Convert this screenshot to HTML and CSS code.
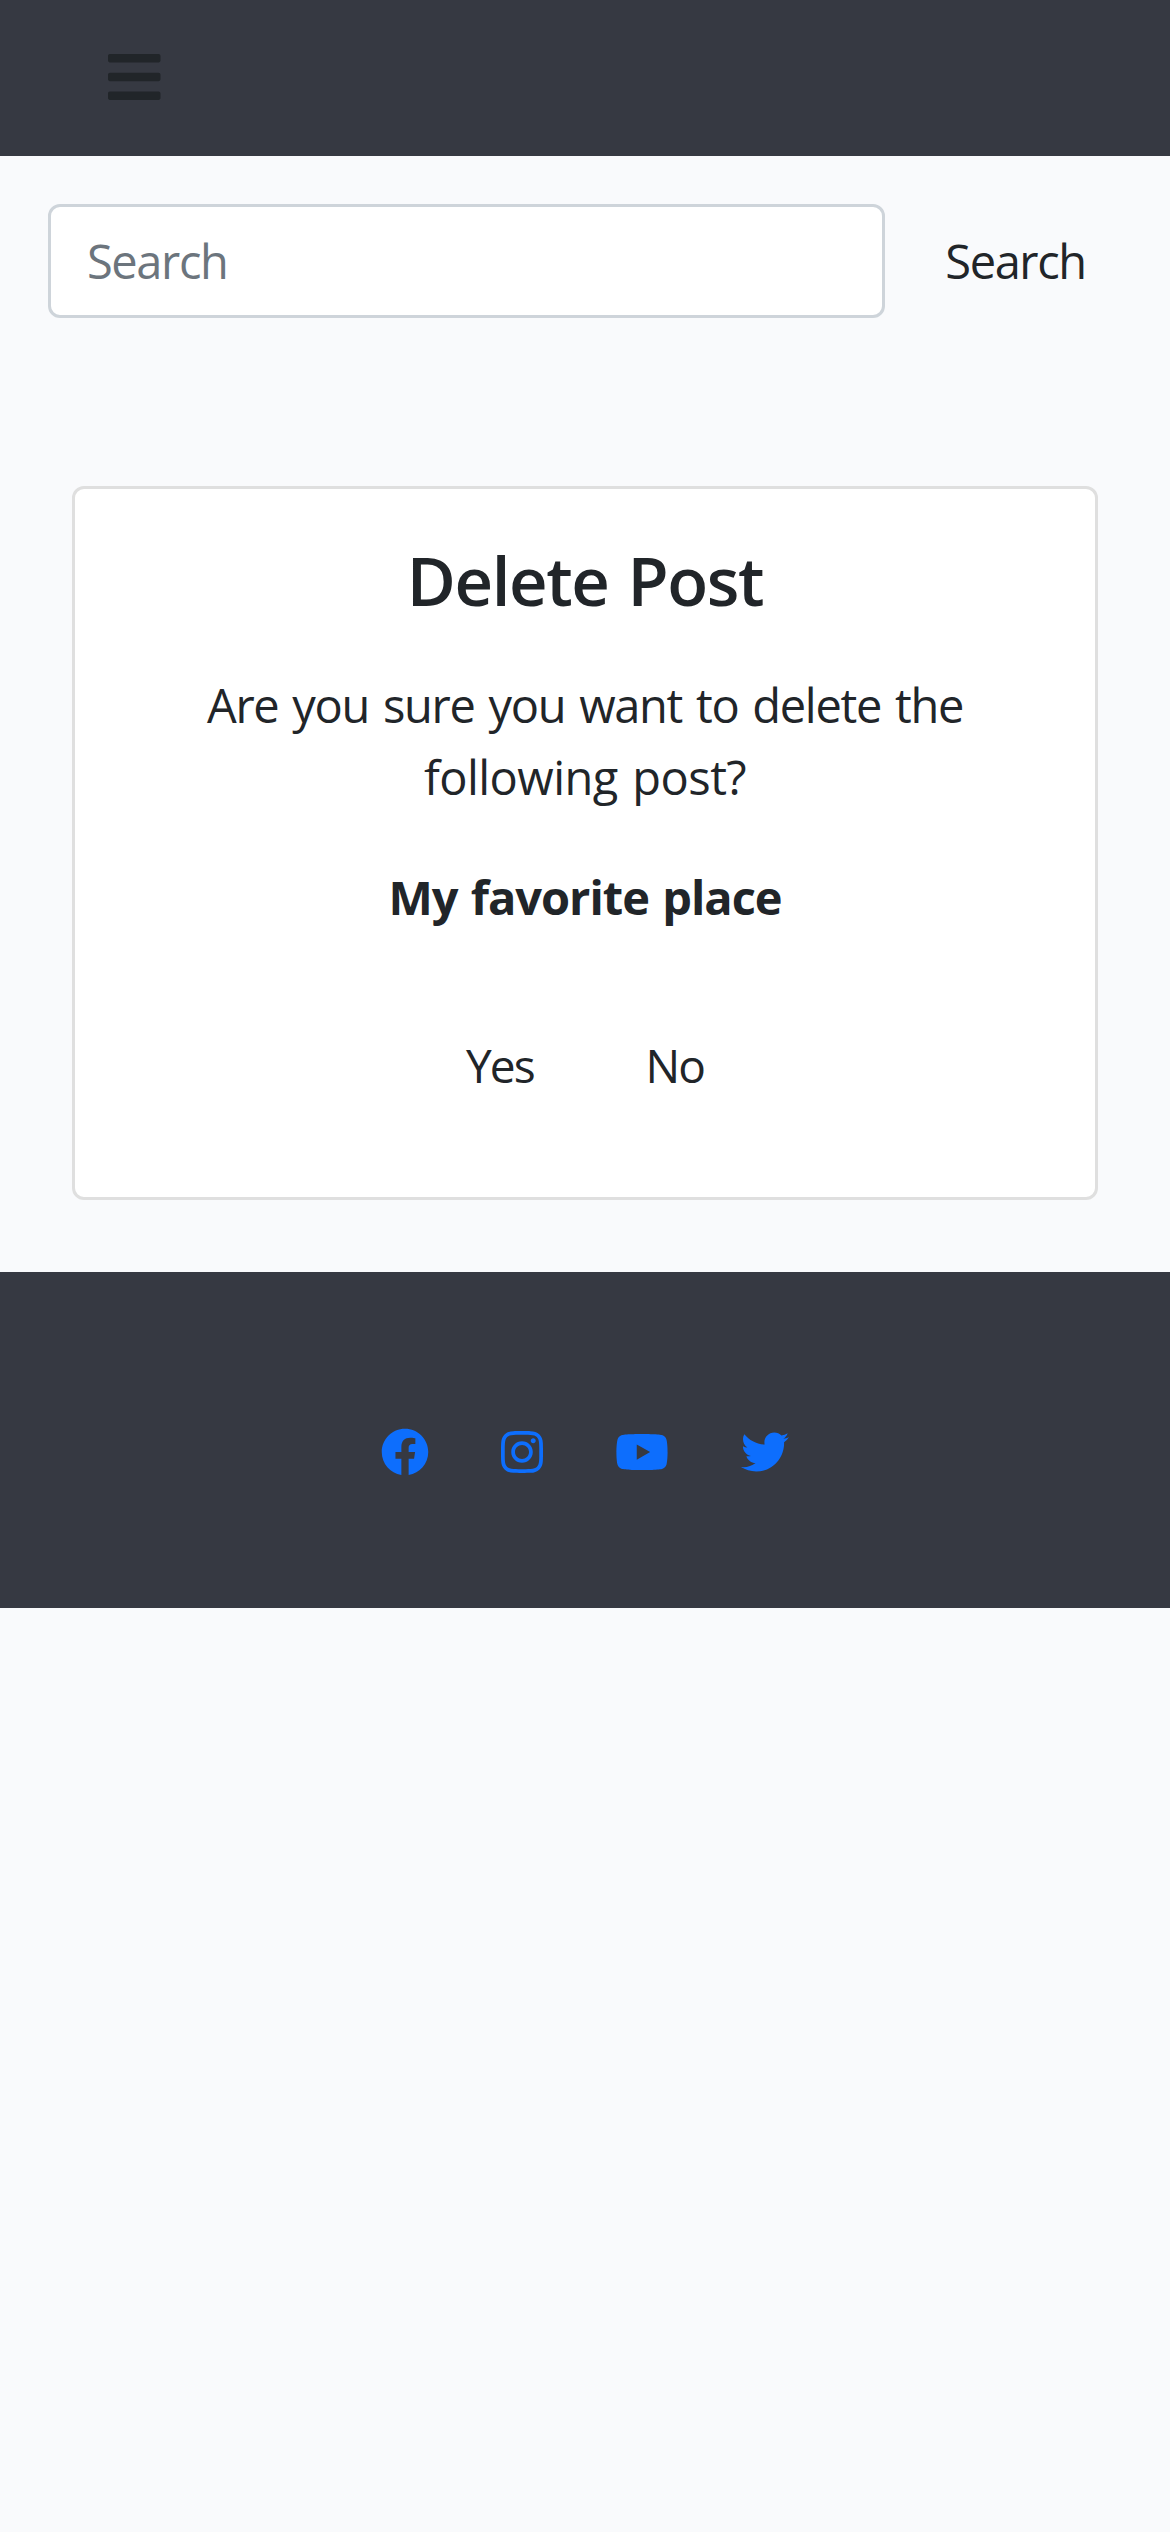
FILE: index.html
```html
<!DOCTYPE html>
<html lang="en">
<head>
<meta charset="utf-8">
<title>Delete Post</title>
<link rel="stylesheet" href="styles.css">
</head>
<body>
<header class="navbar">
  <button class="toggler" aria-label="Menu">
    <svg class="icon-bars" viewBox="0 0 448 512"><path d="M16 132h416c8.837 0 16-7.163 16-16V76c0-8.837-7.163-16-16-16H16C7.163 60 0 67.163 0 76v40c0 8.837 7.163 16 16 16zm0 160h416c8.837 0 16-7.163 16-16v-40c0-8.837-7.163-16-16-16H16c-8.837 0-16 7.163-16 16v40c0 8.837 7.163 16 16 16zm0 160h416c8.837 0 16-7.163 16-16v-40c0-8.837-7.163-16-16-16H16c-8.837 0-16 7.163-16 16v40c0 8.837 7.163 16 16 16z"/></svg>
  </button>
</header>
<form class="search">
  <input class="search-input" type="search" placeholder="Search" aria-label="Search">
  <button class="btn btn-search" type="button">Search</button>
</form>
<main class="card">
  <h3 class="title">Delete Post</h3>
  <p class="text">Are you sure you want to delete the<br><span class="line-two">following post?</span></p>
  <p class="post-name">My favorite place</p>
  <div class="actions">
    <button class="btn btn-action" type="button">Yes</button>
    <button class="btn btn-action" type="button">No</button>
  </div>
</main>
<footer class="footer">
  <a class="social" href="#" aria-label="Facebook"><svg viewBox="0 0 512 512"><path d="M504 256C504 119 393 8 256 8S8 119 8 256c0 123.78 90.69 226.38 209.25 245V327.69h-63V256h63v-54.64c0-62.15 37-96.48 93.67-96.48 27.14 0 55.52 4.84 55.52 4.84v61h-31.28c-30.8 0-40.41 19.12-40.41 38.73V256h68.78l-11 71.69h-57.78V501C413.31 482.38 504 379.78 504 256z"/></svg></a>
  <a class="social" href="#" aria-label="Instagram"><svg viewBox="0 0 448 512"><path d="M224.1 141c-63.6 0-114.9 51.3-114.9 114.9s51.3 114.9 114.9 114.9S339 319.5 339 255.9 287.7 141 224.1 141zm0 189.6c-41.1 0-74.7-33.5-74.7-74.7s33.5-74.7 74.7-74.7 74.7 33.5 74.7 74.7-33.6 74.7-74.7 74.7zm146.4-194.3c0 14.9-12 26.8-26.8 26.8-14.9 0-26.8-12-26.8-26.8s12-26.8 26.8-26.8 26.8 12 26.8 26.8zm76.1 27.2c-1.7-35.9-9.9-67.7-36.2-93.9-26.2-26.2-58-34.4-93.9-36.2-37-2.1-147.9-2.1-184.9 0-35.8 1.7-67.6 9.9-93.9 36.1s-34.4 58-36.2 93.9c-2.1 37-2.1 147.9 0 184.9 1.7 35.9 9.9 67.7 36.2 93.9s58 34.4 93.9 36.2c37 2.1 147.9 2.1 184.9 0 35.9-1.7 67.7-9.9 93.9-36.2 26.2-26.2 34.4-58 36.2-93.9 2.1-37 2.1-147.8 0-184.8zM398.8 388c-7.8 19.6-22.9 34.7-42.6 42.6-29.5 11.7-99.5 9-132.1 9s-102.7 2.6-132.1-9c-19.6-7.8-34.7-22.9-42.6-42.6-11.7-29.5-9-99.5-9-132.1s-2.6-102.7 9-132.1c7.8-19.6 22.9-34.7 42.6-42.6 29.5-11.7 99.5-9 132.1-9s102.7-2.6 132.1 9c19.6 7.8 34.7 22.9 42.6 42.6 11.7 29.5 9 99.5 9 132.1s2.7 102.7-9 132.1z"/></svg></a>
  <a class="social" href="#" aria-label="YouTube"><svg viewBox="0 0 576 512"><path d="M549.655 124.083c-6.281-23.65-24.787-42.276-48.284-48.597C458.781 64 288 64 288 64S117.22 64 74.629 75.486c-23.497 6.322-42.003 24.947-48.284 48.597-11.412 42.867-11.412 132.305-11.412 132.305s0 89.438 11.412 132.305c6.281 23.65 24.787 41.5 48.284 47.821C117.22 448 288 448 288 448s170.78 0 213.371-11.486c23.497-6.321 42.003-24.171 48.284-47.821 11.412-42.867 11.412-132.305 11.412-132.305s0-89.438-11.412-132.305zm-317.51 213.508V175.185l142.739 81.205-142.739 81.201z"/></svg></a>
  <a class="social" href="#" aria-label="Twitter"><svg viewBox="0 0 512 512"><path d="M459.37 151.716c.325 4.548.325 9.097.325 13.645 0 138.72-105.583 298.558-298.558 298.558-59.452 0-114.68-17.219-161.137-47.106 8.447.974 16.568 1.299 25.34 1.299 49.055 0 94.213-16.568 130.274-44.832-46.132-.975-84.792-31.188-98.112-72.772 6.498.974 12.995 1.624 19.818 1.624 9.421 0 18.843-1.3 27.614-3.573-48.081-9.747-84.143-51.98-84.143-102.985v-1.299c13.969 7.797 30.214 12.67 47.431 13.319-28.264-18.843-46.781-51.005-46.781-87.391 0-19.492 5.197-37.36 14.294-52.954 51.655 63.675 129.3 105.258 216.365 109.807-1.624-7.797-2.599-15.918-2.599-24.04 0-57.828 46.782-104.934 104.934-104.934 30.213 0 57.502 12.67 76.67 33.137 23.715-4.548 46.456-13.32 66.599-25.34-7.798 24.366-24.366 44.833-46.132 57.827 21.117-2.273 41.584-8.122 60.426-16.243-14.292 20.791-32.161 39.308-52.628 54.253z"/></svg></a>
</footer>
</body>
</html>
```
FILE: styles.css
```css
* { box-sizing: border-box; }
body {
  margin: 0;
  background: #f9fafc;
  color: #212529;
  font-family: "Open Sans", "Noto Sans", sans-serif;
  font-size: 47px;
  line-height: 72px;
}
button, input { font: inherit; color: inherit; }
.navbar {
  display: flex;
  align-items: flex-start;
  height: 156px;
  padding: 47px 108px;
  background: #363942;
}
.toggler { display: flex; padding: 0; border: 0; background: none; }
.icon-bars { width: 52.5px; height: 60px; fill: #212529; }
.search { display: flex; gap: 24px; padding: 48px 48px 0; }
.search-input {
  width: 837px;
  height: 114px;
  padding: 0 36px;
  border: 3px solid #ced4da;
  border-radius: 12px;
  background: #fff;
  letter-spacing: -1.4px;
  appearance: none;
}
.search-input::placeholder { color: #6c757d; opacity: 1; }
.btn { padding: 0; border: 0; background: none; letter-spacing: -1.4px; white-space: nowrap; }
.btn-search { width: 213px; height: 114px; }
.card {
  margin: 168px 72px 72px;
  height: 714px;
  padding: 49px 48px 48px;
  border: 3px solid #dfdfdf;
  border-radius: 12px;
  background: #fff;
  text-align: center;
}
.title {
  margin: 0 0 47px;
  font-size: 67px;
  font-weight: 600;
  line-height: 84px;
  letter-spacing: -1.4px;
  word-spacing: 3px;
}
.text { margin: 0 0 48px; letter-spacing: -1.3px; word-spacing: 3px; white-space: nowrap; }
.line-two { letter-spacing: -0.55px; }
.post-name { margin: 0 0 96px; font-weight: 700; letter-spacing: -1px; word-spacing: 2px; }
.actions { display: flex; justify-content: center; gap: 112px; }
.btn-action { font-size: 46px; letter-spacing: -2px; }
.footer {
  display: flex;
  justify-content: center;
  gap: 72px;
  height: 336px;
  padding-top: 156px;
  background: #363942;
}
.social { height: 48px; }
.social svg { display: block; height: 48px; fill: #0d6efd; }
```
